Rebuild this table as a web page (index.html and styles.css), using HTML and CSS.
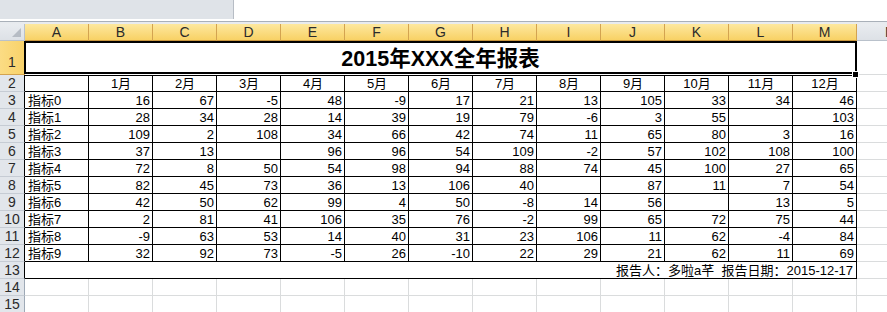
FILE: index.html
```html
<!DOCTYPE html>
<html lang="zh-CN">
<head>
<meta charset="utf-8">
<title>2015年XXX全年报表</title>
<link rel="stylesheet" href="styles.css">
</head>
<body>
<div class="chrome">
  <div class="namebox"></div>
  <div class="formula"></div>
</div>
<div class="rule"></div>
<div class="rule2"></div>
<div class="sheet">
  <div class="corner"><span class="tri"></span></div>
  <div class="hd">A</div><div class="hd">B</div><div class="hd">C</div><div class="hd">D</div><div class="hd">E</div><div class="hd">F</div><div class="hd">G</div><div class="hd">H</div><div class="hd">I</div><div class="hd">J</div><div class="hd">K</div><div class="hd">L</div><div class="hd">M</div>
  <div class="hn">N</div>

  <div class="rh sel">1</div>
  <div class="title">2015年XXX全年报表<span class="handle"></span></div>
  <div class="c n"></div>

  <div class="rh tb">2</div>
  <div class="c t r2"></div>
  <div class="c t r2 ctr">1月</div>
  <div class="c t r2 ctr">2月</div>
  <div class="c t r2 ctr">3月</div>
  <div class="c t r2 ctr">4月</div>
  <div class="c t r2 ctr">5月</div>
  <div class="c t r2 ctr">6月</div>
  <div class="c t r2 ctr">7月</div>
  <div class="c t r2 ctr">8月</div>
  <div class="c t r2 ctr">9月</div>
  <div class="c t r2 ctr">10月</div>
  <div class="c t r2 ctr">11月</div>
  <div class="c t r2 ctr">12月</div>
  <div class="c n"></div>

  <div class="rh tb">3</div>
  <div class="c t lft">指标0</div>
  <div class="c t">16</div><div class="c t">67</div><div class="c t">-5</div><div class="c t">48</div><div class="c t">-9</div><div class="c t">17</div><div class="c t">21</div><div class="c t">13</div><div class="c t">105</div><div class="c t">33</div><div class="c t">34</div><div class="c t">46</div>
  <div class="c n"></div>

  <div class="rh tb">4</div>
  <div class="c t lft">指标1</div>
  <div class="c t">28</div><div class="c t">34</div><div class="c t">28</div><div class="c t">14</div><div class="c t">39</div><div class="c t">19</div><div class="c t">79</div><div class="c t">-6</div><div class="c t">3</div><div class="c t">55</div><div class="c t"></div><div class="c t">103</div>
  <div class="c n"></div>

  <div class="rh tb">5</div>
  <div class="c t lft">指标2</div>
  <div class="c t">109</div><div class="c t">2</div><div class="c t">108</div><div class="c t">34</div><div class="c t">66</div><div class="c t">42</div><div class="c t">74</div><div class="c t">11</div><div class="c t">65</div><div class="c t">80</div><div class="c t">3</div><div class="c t">16</div>
  <div class="c n"></div>

  <div class="rh tb">6</div>
  <div class="c t lft">指标3</div>
  <div class="c t">37</div><div class="c t">13</div><div class="c t"></div><div class="c t">96</div><div class="c t">96</div><div class="c t">54</div><div class="c t">109</div><div class="c t">-2</div><div class="c t">57</div><div class="c t">102</div><div class="c t">108</div><div class="c t">100</div>
  <div class="c n"></div>

  <div class="rh tb">7</div>
  <div class="c t lft">指标4</div>
  <div class="c t">72</div><div class="c t">8</div><div class="c t">50</div><div class="c t">54</div><div class="c t">98</div><div class="c t">94</div><div class="c t">88</div><div class="c t">74</div><div class="c t">45</div><div class="c t">100</div><div class="c t">27</div><div class="c t">65</div>
  <div class="c n"></div>

  <div class="rh tb">8</div>
  <div class="c t lft">指标5</div>
  <div class="c t">82</div><div class="c t">45</div><div class="c t">73</div><div class="c t">36</div><div class="c t">13</div><div class="c t">106</div><div class="c t">40</div><div class="c t"></div><div class="c t">87</div><div class="c t">11</div><div class="c t">7</div><div class="c t">54</div>
  <div class="c n"></div>

  <div class="rh tb">9</div>
  <div class="c t lft">指标6</div>
  <div class="c t">42</div><div class="c t">50</div><div class="c t">62</div><div class="c t">99</div><div class="c t">4</div><div class="c t">50</div><div class="c t">-8</div><div class="c t">14</div><div class="c t">56</div><div class="c t"></div><div class="c t">13</div><div class="c t">5</div>
  <div class="c n"></div>

  <div class="rh tb">10</div>
  <div class="c t lft">指标7</div>
  <div class="c t">2</div><div class="c t">81</div><div class="c t">41</div><div class="c t">106</div><div class="c t">35</div><div class="c t">76</div><div class="c t">-2</div><div class="c t">99</div><div class="c t">65</div><div class="c t">72</div><div class="c t">75</div><div class="c t">44</div>
  <div class="c n"></div>

  <div class="rh tb">11</div>
  <div class="c t lft">指标8</div>
  <div class="c t">-9</div><div class="c t">63</div><div class="c t">53</div><div class="c t">14</div><div class="c t">40</div><div class="c t">31</div><div class="c t">23</div><div class="c t">106</div><div class="c t">11</div><div class="c t">62</div><div class="c t">-4</div><div class="c t">84</div>
  <div class="c n"></div>

  <div class="rh tb">12</div>
  <div class="c t lft">指标9</div>
  <div class="c t">32</div><div class="c t">92</div><div class="c t">73</div><div class="c t">-5</div><div class="c t">26</div><div class="c t">-10</div><div class="c t">22</div><div class="c t">29</div><div class="c t">21</div><div class="c t">62</div><div class="c t">11</div><div class="c t">69</div>
  <div class="c n"></div>

  <div class="rh tb">13</div>
  <div class="c t foot">报告人：多啦a芊&nbsp;&nbsp;报告日期：2015-12-17</div>
  <div class="c n"></div>

  <div class="rh">14</div>
  <div class="c"></div><div class="c"></div><div class="c"></div><div class="c"></div><div class="c"></div><div class="c"></div><div class="c"></div><div class="c"></div><div class="c"></div><div class="c"></div><div class="c"></div><div class="c"></div><div class="c"></div>
  <div class="c n"></div>

  <div class="rh">15</div>
  <div class="c"></div><div class="c"></div><div class="c"></div><div class="c"></div><div class="c"></div><div class="c"></div><div class="c"></div><div class="c"></div><div class="c"></div><div class="c"></div><div class="c"></div><div class="c"></div><div class="c"></div>
  <div class="c n"></div>
</div>
</body>
</html>
```
FILE: styles.css
```css
* { box-sizing: border-box; }

body {
  margin: 0;
  width: 887px;
  height: 312px;
  overflow: hidden;
  background: #fff;
  font-family: "Liberation Sans", Arial, "Noto Sans CJK SC", sans-serif;
}

.chrome {
  display: flex;
  height: 21px;
}

.namebox {
  width: 234px;
  height: 19px;
  background: #dfe3e8;
  border-right: 1px solid #b7bdc5;
}

.formula {
  flex: 1;
  background: #fff;
}

.rule {
  height: 1px;
  background: #a9b0b9;
}

.rule2 {
  height: 2px;
  background: #e8ebef;
}

.sheet {
  display: grid;
  grid-template-columns: 25px repeat(13, 64px) 64px;
  grid-template-rows: 17px 34px repeat(14, 17px);
  width: 921px;
}

/* column headers */
.corner,
.hd,
.hn {
  display: flex;
  align-items: center;
  justify-content: center;
  font-size: 14px;
  color: #2a2a2a;
  border-bottom: 1px solid #b9c1cb;
}

.corner {
  position: relative;
  background: linear-gradient(#e9ecf0, #dde1e6);
  border-right: 1px solid #b9c1cb;
}

.tri {
  position: absolute;
  right: 3px;
  bottom: 3px;
  width: 0;
  height: 0;
  border-left: 9px solid transparent;
  border-bottom: 9px solid #b6bcc4;
}

.hd {
  background: linear-gradient(#fde89f, #f8d165);
  border-right: 1px solid #d3a350;
  border-bottom-color: #c9963d;
}

.hn {
  background: linear-gradient(#e9ecf0, #dde1e6);
  border-right: 1px solid #c3c9d0;
  justify-content: flex-start;
  padding-left: 28px;
}

/* row headers */
.rh {
  display: flex;
  align-items: center;
  justify-content: center;
  font-size: 14px;
  color: #2a2a2a;
  background: #e2e6eb;
  border-right: 1px solid #9ea9b6;
  border-bottom: 1px solid #c6ccd4;
}

.rh.sel {
  align-items: flex-end;
  padding-bottom: 4px;
  background: linear-gradient(90deg, #fbdc84, #f8d26a);
  border-bottom-color: #d3a350;
  border-right-color: #c9963d;
}

.rh.tb {
  border-right-color: #000;
}

/* cells */
.c {
  display: flex;
  align-items: center;
  justify-content: flex-end;
  padding: 1px 2px 0 3px;
  white-space: nowrap;
  overflow: hidden;
  font-family: "Liberation Sans", Arial, "Noto Sans CJK SC", sans-serif;
  font-size: 13px;
  line-height: 14px;
  color: #000;
  border-right: 1px solid #dadcdd;
  border-bottom: 1px solid #dadcdd;
}

.c.n {
  border-right: none;
}

.c.t {
  border-right-color: #000;
  border-bottom-color: #000;
}

.c.r2 {
  border-top: 1px solid #000;
  padding-top: 0;
}

.c.ctr {
  justify-content: center;
}

.c.lft {
  justify-content: flex-start;
}

.foot {
  grid-column: span 13;
  padding-right: 3px;
}

.title {
  grid-column: span 13;
  margin-left: -1px;
  height: 33px;
  position: relative;
  display: flex;
  align-items: flex-end;
  justify-content: center;
  padding-bottom: 1px;
  border: 2px solid #000;
  font-family: "Liberation Sans", Arial, "Noto Sans CJK SC", sans-serif;
  font-weight: bold;
  font-size: 21.5px;
  line-height: 24px;
  color: #000;
}

.handle {
  position: absolute;
  right: -4px;
  bottom: -6px;
  width: 7px;
  height: 7px;
  background: #000;
  border: 1px solid #fff;
}
```
